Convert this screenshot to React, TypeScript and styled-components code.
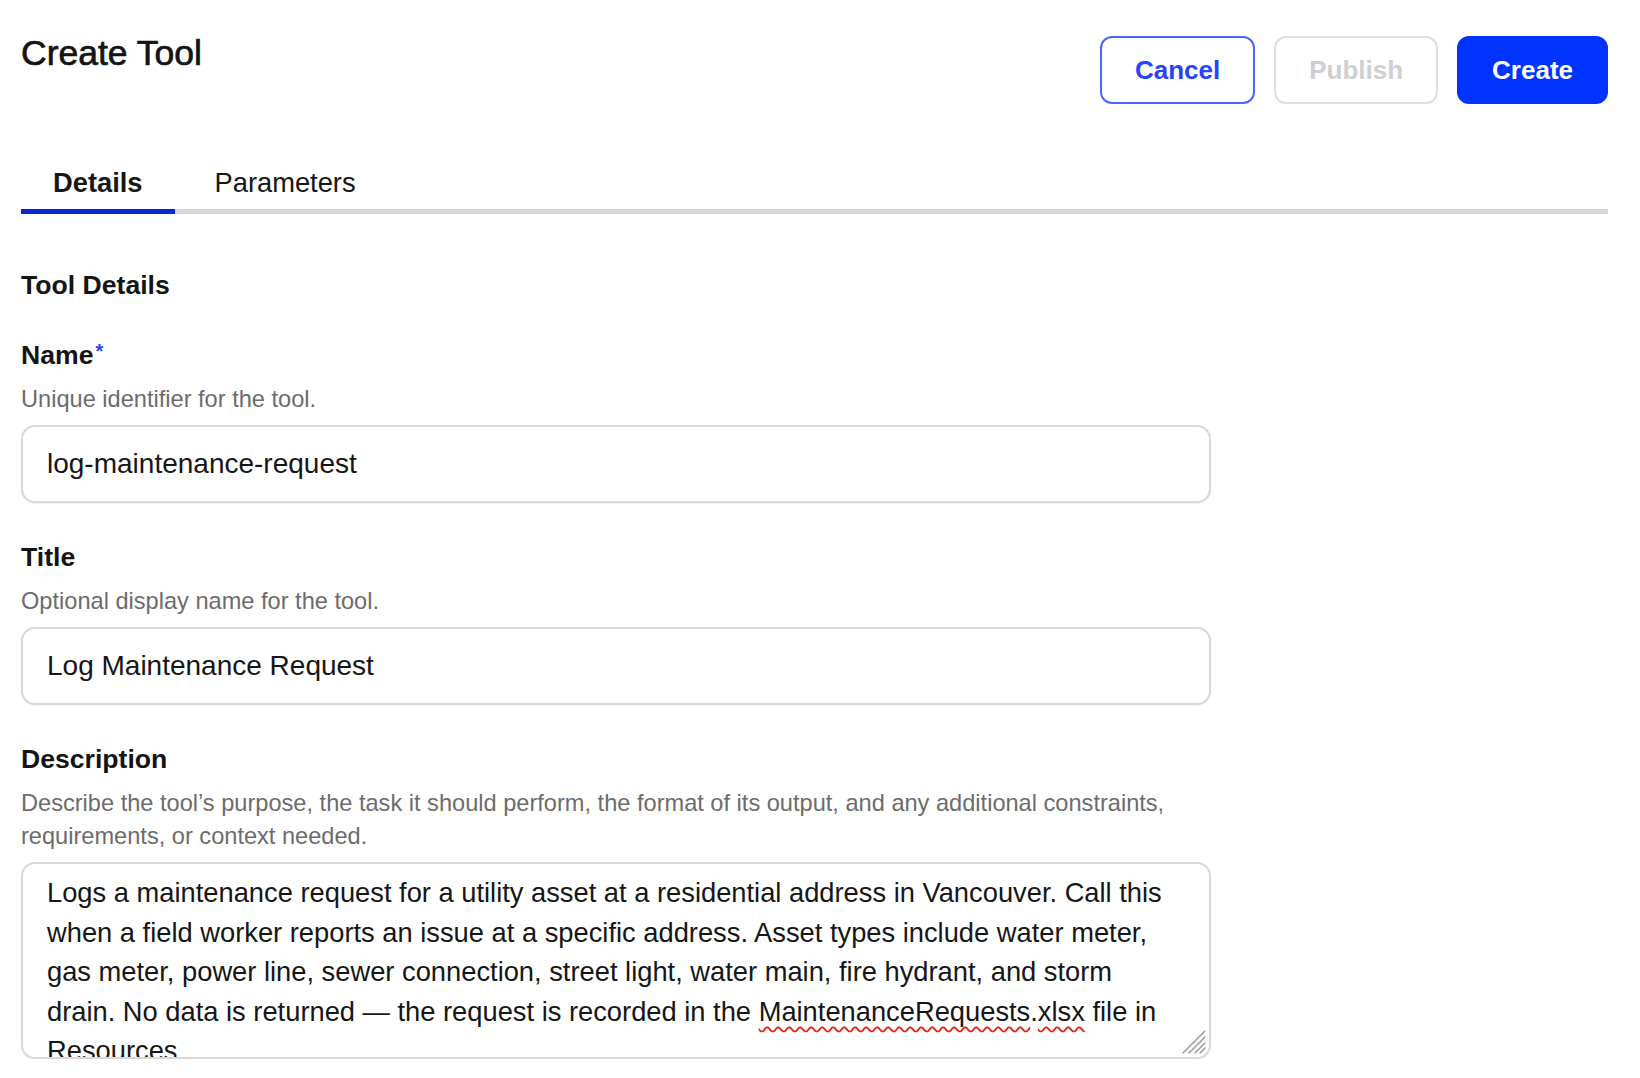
import * as React from "react";
import styled, { createGlobalStyle } from "styled-components";

const GlobalStyle = createGlobalStyle`
  html, body {
    margin: 0;
    background: #ffffff;
  }
  body {
    font-family: "Liberation Sans", Arial, sans-serif;
    color: #161616;
  }
  * {
    box-sizing: border-box;
  }
`;

const Page = styled.div`
  padding: 33px 32px 0 21px;
`;

const Header = styled.header`
  display: flex;
  justify-content: space-between;
  align-items: flex-start;
`;

// medium weight: regular face thickened a little
const PageTitle = styled.h1`
  margin: 0;
  font-size: 35.5px;
  line-height: 40px;
  font-weight: 400;
  -webkit-text-stroke: 0.7px #141414;
  color: #141414;
`;

const Actions = styled.div`
  display: flex;
  gap: 19px;
  margin-top: 3px;
`;

type Variant = "outline" | "disabled" | "primary";

const Button = styled.button<{ $variant: Variant }>`
  height: 68px;
  padding: 0 33px;
  border-radius: 12px;
  border: 2px solid
    ${(p) =>
      p.$variant === "outline"
        ? "#4a66ff"
        : p.$variant === "disabled"
        ? "#dedede"
        : "#0033ff"};
  background: ${(p) => (p.$variant === "primary" ? "#0033ff" : "#ffffff")};
  color: ${(p) =>
    p.$variant === "outline"
      ? "#2443ff"
      : p.$variant === "disabled"
      ? "#cfcfcf"
      : "#ffffff"};
  font-family: inherit;
  font-size: 26px;
  font-weight: 700;
  cursor: ${(p) => (p.$variant === "disabled" ? "default" : "pointer")};
`;

const TabList = styled.div`
  display: flex;
  gap: 8px;
  margin-top: 63px;
  border-bottom: 5px solid #d4d7d7;
`;

const Tab = styled.button<{ $active?: boolean }>`
  padding: 0 32px 10px;
  margin-bottom: -5px;
  border: none;
  border-bottom: 5px solid ${(p) => (p.$active ? "#0a28d2" : "transparent")};
  background: none;
  font-family: inherit;
  font-size: 27.3px;
  line-height: 32px;
  font-weight: ${(p) => (p.$active ? 700 : 400)};
  color: #161616;
  cursor: pointer;
`;

const Form = styled.form`
  width: 1190px;
  display: flex;
  flex-direction: column;
  gap: 38px;
  margin-top: 55px;
`;

const SectionTitle = styled.h2`
  margin: 0;
  font-size: 26.6px;
  line-height: 32px;
  font-weight: 700;
  color: #141414;
`;

const Field = styled.div`
  display: flex;
  flex-direction: column;
`;

const Label = styled.label`
  font-size: 26.6px;
  line-height: 32px;
  font-weight: 700;
  color: #141414;
`;

const Required = styled.span`
  color: #2443ff;
  font-size: 20px;
  line-height: 0;
  vertical-align: 6px;
  margin-left: 2px;
`;

const HelpText = styled.p`
  margin: 12px 0 0;
  font-size: 23.6px;
  line-height: 33px;
  color: #6c6c6c;
`;

const TextInput = styled.input`
  margin-top: 9px;
  width: 100%;
  height: 78px;
  padding: 0 24px;
  border: 2px solid #d9d9d9;
  border-radius: 14px;
  box-shadow: 0 1px 1px rgba(0, 0, 0, 0.06);
  font-family: inherit;
  font-size: 28px;
  color: #161616;
  background: #ffffff;
  outline: none;
`;

const TextArea = styled.div`
  position: relative;
  margin-top: 9px;
  height: 197px;
  padding: 9px 32px 0 24px;
  border: 2px solid #d9d9d9;
  border-radius: 14px;
  box-shadow: 0 1px 1px rgba(0, 0, 0, 0.06);
  overflow: hidden;
  font-size: 27.3px;
  line-height: 39.5px;
  color: #161616;
  white-space: pre-wrap;
`;

const Misspelled = styled.span`
  text-decoration: underline wavy #e3261f;
  text-decoration-thickness: 1.5px;
  text-underline-offset: 5px;
  text-decoration-skip-ink: none;
`;

const ResizeHandle = styled.svg`
  position: absolute;
  right: 2px;
  bottom: 2px;
  width: 28px;
  height: 28px;
`;

export default function App() {
  return (
    <>
      <GlobalStyle />
      <Page>
        <Header>
          <PageTitle>Create Tool</PageTitle>
          <Actions>
            <Button type="button" $variant="outline">
              Cancel
            </Button>
            <Button type="button" $variant="disabled" disabled>
              Publish
            </Button>
            <Button type="button" $variant="primary">
              Create
            </Button>
          </Actions>
        </Header>

        <TabList role="tablist">
          <Tab type="button" role="tab" $active>
            Details
          </Tab>
          <Tab type="button" role="tab">
            Parameters
          </Tab>
        </TabList>

        <Form onSubmit={(e) => e.preventDefault()}>
          <SectionTitle>Tool Details</SectionTitle>

          <Field>
            <Label htmlFor="tool-name">
              Name<Required>*</Required>
            </Label>
            <HelpText>Unique identifier for the tool.</HelpText>
            <TextInput id="tool-name" defaultValue="log-maintenance-request" />
          </Field>

          <Field>
            <Label htmlFor="tool-title">Title</Label>
            <HelpText>Optional display name for the tool.</HelpText>
            <TextInput id="tool-title" defaultValue="Log Maintenance Request" />
          </Field>

          <Field>
            <Label>Description</Label>
            <HelpText>
              Describe the tool’s purpose, the task it should perform, the format of its
              output, and any additional constraints, requirements, or context needed.
            </HelpText>
            <TextArea role="textbox" aria-multiline="true">
              Logs a maintenance request for a utility asset at a residential address in
              Vancouver. Call this when a field worker reports an issue at a specific
              address. Asset types include water meter, gas meter, power line, sewer
              connection, street light, water main, fire hydrant, and storm drain. No data
              is returned — the request is recorded in the{" "}
              <Misspelled>MaintenanceRequests</Misspelled>.<Misspelled>xlsx</Misspelled>{" "}
              file in Resources.
              <ResizeHandle viewBox="0 0 28 28" aria-hidden="true">
                <g stroke="#9c9c9c" strokeWidth="1.6" strokeLinecap="round">
                  <line x1="26" y1="4" x2="4" y2="26" />
                  <line x1="26" y1="10" x2="10" y2="26" />
                  <line x1="26" y1="16" x2="16" y2="26" />
                  <line x1="26" y1="21" x2="21" y2="26" />
                </g>
              </ResizeHandle>
            </TextArea>
          </Field>
        </Form>
      </Page>
    </>
  );
}
